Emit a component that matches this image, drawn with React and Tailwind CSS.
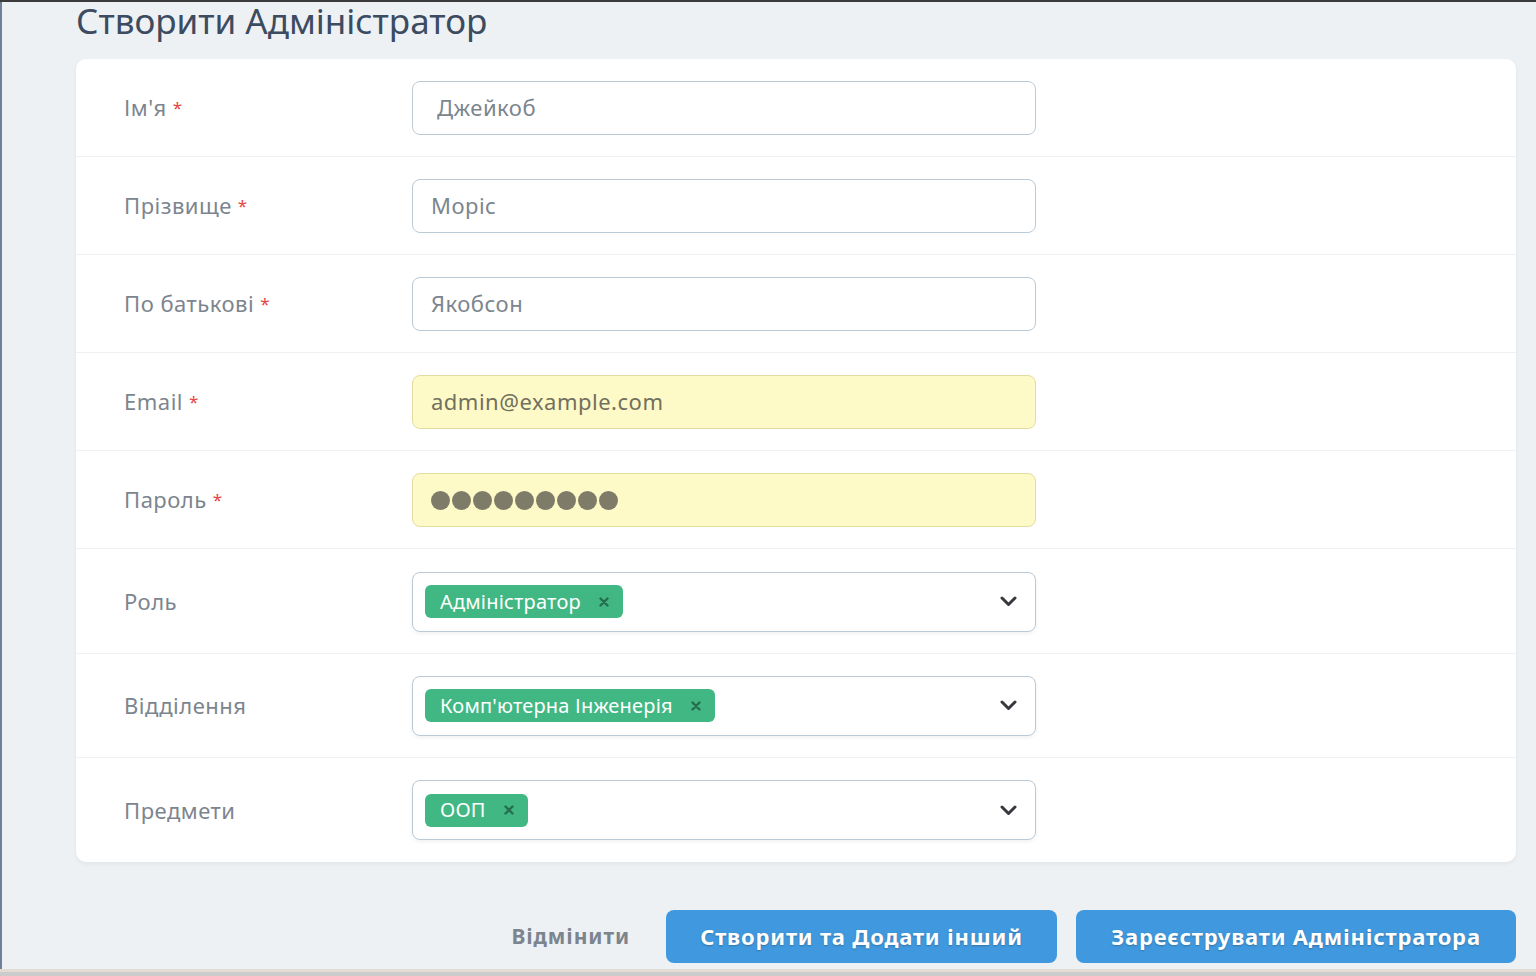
import React from "react";

const font = { fontFamily: "'Noto Sans', 'Open Sans', sans-serif" };

function Label({ text, required }) {
  return (
    <div className="w-[336px] pl-[48px] text-[22px] tracking-[0.5px] text-[#7c858e]">
      {text}
      {required && <span className="ml-[6px] text-[17px] align-[2px] text-[#e74444]">*</span>}
    </div>
  );
}

function TextRow({ label, value, first, autofill, password }) {
  return (
    <div className="flex h-[98px] items-center border-b border-[#eef1f3]">
      <Label text={label} required />
      <div
        className={`flex h-[54px] w-[624px] items-center rounded-[8px] border text-[22px] tracking-[0.5px] ${
          autofill
            ? "border-[#e2dca0] bg-[#fefac8] text-[#72705e]"
            : "border-[#bacad6] bg-white text-[#7c858e]"
        } ${first ? "pl-[24px]" : "pl-[18px]"}`}
      >
        {password ? (
          <div className="flex gap-[2px] pt-[2px]">
            {Array.from({ length: 9 }).map((_, i) => (
              <span key={i} className="block h-[19px] w-[19px] rounded-full bg-[#7e7c69]" />
            ))}
          </div>
        ) : (
          value
        )}
      </div>
    </div>
  );
}

function SelectRow({ label, tag, last }) {
  return (
    <div className={`flex h-[104px] items-center ${last ? "" : "border-b border-[#eef1f3]"}`}>
      <Label text={label} />
      <div className="flex h-[60px] w-[624px] items-center justify-between rounded-[8px] border border-[#bacad6] bg-white pl-[12px] pr-[18px] shadow-[0_2px_4px_rgba(0,0,0,0.06)]">
        <div className="flex h-[33px] items-center rounded-[6px] bg-[#41b883] pl-[15px] pr-[14px] text-[20px] tracking-[0.2px] text-white">
          {tag}
          <svg className="ml-[18px]" width="10" height="10" viewBox="0 0 10 10">
            <path d="M1.5 1.5 L8.5 8.5 M8.5 1.5 L1.5 8.5" stroke="#266d4d" strokeWidth="2.4" strokeLinecap="round" />
          </svg>
        </div>
        <svg width="17" height="11" viewBox="0 0 17 11">
          <path d="M2 2 L8.5 8.5 L15 2" fill="none" stroke="#35393d" strokeWidth="3" strokeLinecap="round" strokeLinejoin="round" />
        </svg>
      </div>
    </div>
  );
}

export default function App() {
  return (
    <div className="flex h-[976px] w-[1536px] flex-col overflow-hidden bg-[#edf1f4]" style={font}>
      <div className="h-[2px] bg-[#3b3b3b]" />
      <div className="flex flex-1 border-l-2 border-[#6f7f9c]">
        <div className="flex flex-col pl-[74px]">
          <h1 className="h-[57px] pt-[1px] text-[35px] leading-[36px] font-normal text-[#3c4b5f]">
            Створити Адміністратор
          </h1>
          <div className="w-[1440px] rounded-[10px] bg-white shadow-[0_2px_4px_rgba(0,0,0,0.05)]">
            <TextRow label="Ім'я" value="Джейкоб" first />
            <TextRow label="Прізвище" value="Моріс" />
            <TextRow label="По батькові" value="Якобсон" />
            <TextRow label="Email" value="admin@example.com" autofill />
            <TextRow label="Пароль" autofill password />
            <div className="h-[1px]" />
            <SelectRow label="Роль" tag="Адміністратор" />
            <SelectRow label="Відділення" tag="Комп'ютерна Інженерія" />
            <SelectRow label="Предмети" tag="ООП" last />
          </div>
          <div className="mt-[48px] flex items-center justify-end">
            <button className="mr-[36px] text-[21px] font-bold tracking-[0.9px] text-[#7c858e]">Відмінити</button>
            <button className="mr-[19px] h-[53px] w-[391px] rounded-[8px] bg-[#4099de] text-[22px] font-bold tracking-[0.8px] text-white [text-shadow:0_1px_2px_rgba(0,0,0,0.25)]">
              Створити та Додати інший
            </button>
            <button className="h-[53px] w-[440px] rounded-[8px] bg-[#4099de] text-[22px] font-bold tracking-[0.8px] text-white [text-shadow:0_1px_2px_rgba(0,0,0,0.25)]">
              Зареєструвати Адміністратора
            </button>
          </div>
        </div>
      </div>
      <div className="h-[3px] bg-[#e3dcd4]" />
      <div className="h-[4px] bg-[#cccccc]" />
    </div>
  );
}
